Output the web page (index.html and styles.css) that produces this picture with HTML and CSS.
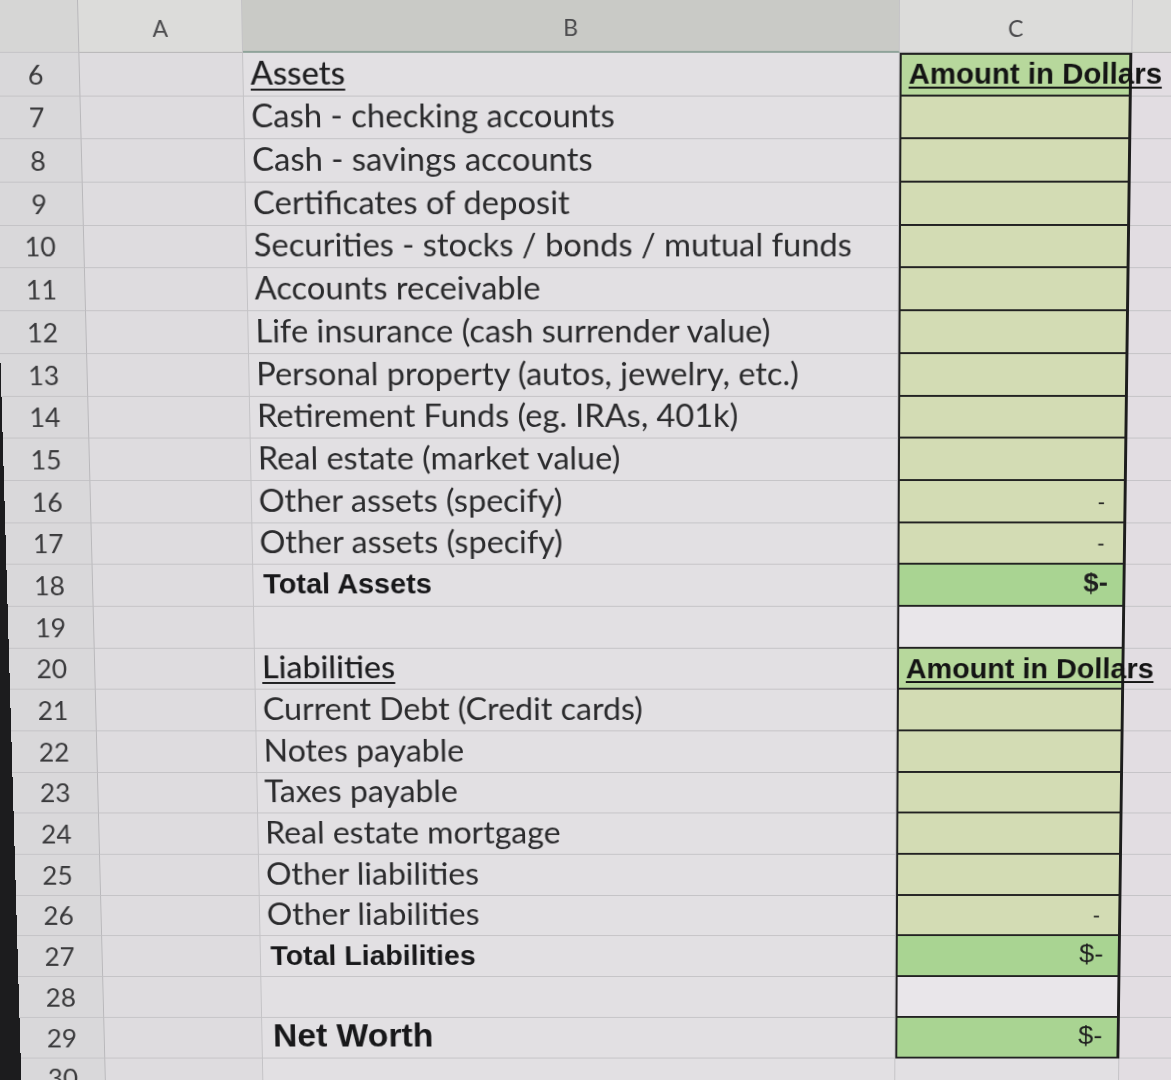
FILE: index.html
```html
<!DOCTYPE html>
<html lang="en">
<head>
<meta charset="utf-8">
<title>Net Worth Statement</title>
<link rel="stylesheet" href="styles.css">
</head>
<body>
<div class="screen">
  <div class="sheet">
    <div class="row head">
      <div class="cell rh corner"></div>
      <div class="cell colh">A</div>
      <div class="cell colh sel">B</div>
      <div class="cell colh">C</div>
      <div class="cell colh"></div>
    </div>

    <div class="row r6">
      <div class="cell rh">6</div><div class="cell a"></div>
      <div class="cell b"><span class="ul">Assets</span></div>
      <div class="cell c box first hdr"><span class="amt-h">Amount in Dollars</span></div>
      <div class="cell d"></div>
    </div>
    <div class="row">
      <div class="cell rh">7</div><div class="cell a"></div>
      <div class="cell b">Cash - checking accounts</div>
      <div class="cell c box lt"></div><div class="cell d"></div>
    </div>
    <div class="row">
      <div class="cell rh">8</div><div class="cell a"></div>
      <div class="cell b">Cash - savings accounts</div>
      <div class="cell c box lt"></div><div class="cell d"></div>
    </div>
    <div class="row">
      <div class="cell rh">9</div><div class="cell a"></div>
      <div class="cell b">Certificates of deposit</div>
      <div class="cell c box lt"></div><div class="cell d"></div>
    </div>
    <div class="row">
      <div class="cell rh">10</div><div class="cell a"></div>
      <div class="cell b">Securities - stocks / bonds / mutual funds</div>
      <div class="cell c box lt"></div><div class="cell d"></div>
    </div>
    <div class="row">
      <div class="cell rh">11</div><div class="cell a"></div>
      <div class="cell b">Accounts receivable</div>
      <div class="cell c box lt"></div><div class="cell d"></div>
    </div>
    <div class="row">
      <div class="cell rh">12</div><div class="cell a"></div>
      <div class="cell b">Life insurance (cash surrender value)</div>
      <div class="cell c box lt"></div><div class="cell d"></div>
    </div>
    <div class="row">
      <div class="cell rh">13</div><div class="cell a"></div>
      <div class="cell b">Personal property (autos, jewelry, etc.)</div>
      <div class="cell c box lt"></div><div class="cell d"></div>
    </div>
    <div class="row">
      <div class="cell rh">14</div><div class="cell a"></div>
      <div class="cell b">Retirement Funds (eg. IRAs, 401k)</div>
      <div class="cell c box lt"></div><div class="cell d"></div>
    </div>
    <div class="row">
      <div class="cell rh">15</div><div class="cell a"></div>
      <div class="cell b">Real estate (market value)</div>
      <div class="cell c box lt"></div><div class="cell d"></div>
    </div>
    <div class="row">
      <div class="cell rh">16</div><div class="cell a"></div>
      <div class="cell b">Other assets (specify)</div>
      <div class="cell c box lt num"><span class="dash">-</span></div><div class="cell d"></div>
    </div>
    <div class="row">
      <div class="cell rh">17</div><div class="cell a"></div>
      <div class="cell b">Other assets (specify)</div>
      <div class="cell c box lt num"><span class="dash">-</span></div><div class="cell d"></div>
    </div>
    <div class="row">
      <div class="cell rh">18</div><div class="cell a"></div>
      <div class="cell b"><span class="total">Total Assets</span></div>
      <div class="cell c box tot num"><span class="money strong">$-</span></div><div class="cell d"></div>
    </div>
    <div class="row">
      <div class="cell rh">19</div><div class="cell a"></div>
      <div class="cell b"></div>
      <div class="cell c box blank"></div><div class="cell d"></div>
    </div>
    <div class="row">
      <div class="cell rh">20</div><div class="cell a"></div>
      <div class="cell b"><span class="ul">Liabilities</span></div>
      <div class="cell c box hdr"><span class="amt-h">Amount in Dollars</span></div><div class="cell d"></div>
    </div>
    <div class="row">
      <div class="cell rh">21</div><div class="cell a"></div>
      <div class="cell b">Current Debt (Credit cards)</div>
      <div class="cell c box lt"></div><div class="cell d"></div>
    </div>
    <div class="row">
      <div class="cell rh">22</div><div class="cell a"></div>
      <div class="cell b">Notes payable</div>
      <div class="cell c box lt"></div><div class="cell d"></div>
    </div>
    <div class="row">
      <div class="cell rh">23</div><div class="cell a"></div>
      <div class="cell b">Taxes payable</div>
      <div class="cell c box lt"></div><div class="cell d"></div>
    </div>
    <div class="row">
      <div class="cell rh">24</div><div class="cell a"></div>
      <div class="cell b">Real estate mortgage</div>
      <div class="cell c box lt"></div><div class="cell d"></div>
    </div>
    <div class="row">
      <div class="cell rh">25</div><div class="cell a"></div>
      <div class="cell b">Other liabilities</div>
      <div class="cell c box lt"></div><div class="cell d"></div>
    </div>
    <div class="row">
      <div class="cell rh">26</div><div class="cell a"></div>
      <div class="cell b">Other liabilities</div>
      <div class="cell c box lt num"><span class="dash">-</span></div><div class="cell d"></div>
    </div>
    <div class="row">
      <div class="cell rh">27</div><div class="cell a"></div>
      <div class="cell b"><span class="total">Total Liabilities</span></div>
      <div class="cell c box tot num"><span class="money">$-</span></div><div class="cell d"></div>
    </div>
    <div class="row">
      <div class="cell rh">28</div><div class="cell a"></div>
      <div class="cell b"></div>
      <div class="cell c box blank"></div><div class="cell d"></div>
    </div>
    <div class="row">
      <div class="cell rh">29</div><div class="cell a"></div>
      <div class="cell b"><span class="net">Net Worth</span></div>
      <div class="cell c box tot num"><span class="money">$-</span></div><div class="cell d"></div>
    </div>
    <div class="row">
      <div class="cell rh">30</div><div class="cell a"></div>
      <div class="cell b"></div>
      <div class="cell c"></div><div class="cell d"></div>
    </div>
    <div class="row">
      <div class="cell rh">31</div><div class="cell a"></div>
      <div class="cell b"></div>
      <div class="cell c"></div><div class="cell d"></div>
    </div>
  </div>
</div>
</body>
</html>
```

FILE: styles.css
```css
html, body {
  margin: 0;
  padding: 0;
}
body {
  background: #1c1c1e;
  overflow: hidden;
  width: 1171px;
  height: 1080px;
}
.screen {
  width: 1171px;
  height: 1080px;
  overflow: hidden;
}
.sheet {
  margin-left: -10px;
  width: 1400px;
  background: #dfdde0;
  transform-origin: 614px 0;
  transform: perspective(1000px) rotateX(-2.1deg) skewX(0.37deg);
  font-family: "Lato", "Open Sans", sans-serif;
  color: #2b2b2d;
}
.row {
  display: grid;
  grid-template-columns: 88px 164px 658px 233px 260px;
  height: 43.7px;
}
.row.head {
  height: 53px;
}
.cell {
  box-sizing: border-box;
  border-right: 1px solid #c4c3c6;
  border-bottom: 1px solid #c4c3c6;
  display: flex;
  align-items: flex-end;
  min-width: 0;
  white-space: nowrap;
}
.rh {
  background: #d9d8da;
  justify-content: center;
  font-size: 27px;
  line-height: 1;
  padding-bottom: 8px;
  color: #3a3a3c;
  border-right: 1px solid #b9b8bb;
}
.corner {
  background: #d6d6d5;
}
.colh {
  background: #dcdcda;
  justify-content: center;
  font-size: 23px;
  line-height: 1;
  padding-bottom: 12px;
  color: #4a4a4c;
  border-bottom: 1px solid #b5b5b5;
}
.colh.sel {
  background: #c9cac6;
  border-bottom: 2px solid #8fa39a;
}
.a {
  background: #dedcdf;
}
.b {
  background: #e2e0e3;
  padding-left: 7px;
  padding-bottom: 7px;
  font-size: 33px;
  line-height: 1;
  overflow: visible;
}
.d {
  background: #e2dde2;
}
.ul {
  text-decoration: underline;
  text-decoration-thickness: 2px;
  text-underline-offset: 4px;
  font-weight: 500;
  color: #1f1f21;
}
.total {
  font-family: "Liberation Sans", Arial, sans-serif;
  font-weight: bold;
  font-size: 29.5px;
  color: #18181a;
  padding-left: 3px;
  padding-bottom: 1px;
}
.net {
  font-family: "Liberation Sans", Arial, sans-serif;
  font-weight: bold;
  font-size: 35px;
  color: #18181a;
  padding-left: 4px;
}

/* column C boxed amounts */
.c {
  background: #e2e0e3;
}
.box {
  border-left: 2px solid #222;
  border-right: 3px solid #1d1d1d;
  border-bottom: 2px solid #222;
}
.box.first {
  border-top: 2px solid #222;
}
.lt {
  background: #d3dcb4;
}
.hdr {
  background: #b7d89c;
  position: relative;
  z-index: 1;
  overflow: visible;
  padding-left: 7px;
  padding-bottom: 6px;
}
.tot {
  background: #a9d492;
}
.blank {
  background: #e9e6ea;
}
.num {
  justify-content: flex-end;
  padding-right: 15px;
  padding-bottom: 9px;
  font-family: "Liberation Sans", Arial, sans-serif;
  line-height: 1;
  color: #1f1f1f;
}
.amt-h {
  font-family: "Liberation Sans", Arial, sans-serif;
  font-weight: bold;
  font-size: 29.5px;
  line-height: 1;
  color: #141414;
  text-decoration: underline;
  text-decoration-thickness: 2px;
  text-underline-offset: 3px;
}
.dash {
  font-size: 22px;
  padding-right: 4px;
}
.money {
  font-size: 28px;
}
.money.strong {
  font-weight: bold;
}
```
